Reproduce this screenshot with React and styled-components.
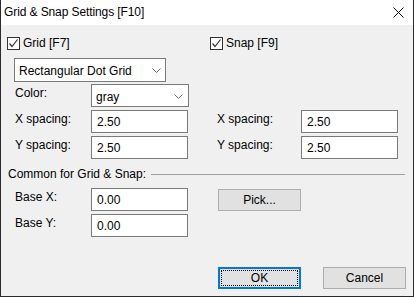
import React from "react";
import styled, { createGlobalStyle } from "styled-components";

const Global = createGlobalStyle`
  html, body { margin: 0; padding: 0; background: #f0f0f0; }
  body { font-family: "Liberation Sans", Arial, sans-serif; font-size: 12px; color: #000; }
  * { box-sizing: border-box; }
`;

const Window = styled.div`
  width: 414px;
  height: 297px;
  display: flex;
  flex-direction: column;
  background: #f0f0f0;
  border: 1px solid #2b2b2b;
  border-top: none;
`;

const TitleBar = styled.div`
  height: 25px;
  flex: none;
  background: #fff;
  display: flex;
  align-items: center;
  justify-content: space-between;
  padding: 0 9px 1px 3px;
  font-size: 12px;
  letter-spacing: -0.1px;
`;

const Content = styled.div`
  flex: 1;
  display: flex;
  flex-direction: column;
  padding: 12px 6px 7px 6px;
`;

const CheckRow = styled.div`
  display: flex;
  height: 13px;
  align-items: center;
`;

const CheckItem = styled.label`
  display: flex;
  align-items: center;
  gap: 3px;
  width: ${(p) => p.$width || "auto"};
  line-height: 13px;
`;

const Box = styled.span`
  width: 13px;
  height: 13px;
  border: 1px solid #333;
  background: #fff;
  display: flex;
  align-items: center;
  justify-content: center;
`;

const Select = styled.div`
  width: ${(p) => p.$width}px;
  height: ${(p) => p.$height}px;
  margin: ${(p) => p.$margin || "0"};
  background: #fff;
  border: 1px solid #7a7a7a;
  display: flex;
  align-items: center;
  justify-content: space-between;
  padding: ${(p) => p.$pad || "1px 6px 0 4px"};
`;

const FieldGrid = styled.div`
  display: grid;
  grid-template-columns: ${(p) => p.$cols};
  grid-auto-rows: 23px;
  row-gap: 3px;
  margin: ${(p) => p.$margin};
`;

const Label = styled.div`
  line-height: 14px;
  padding-top: 2px;
  grid-column: ${(p) => p.$col || "auto"};
`;

const Input = styled.div`
  width: 97px;
  height: 23px;
  background: #fff;
  border: 1px solid #7a7a7a;
  display: flex;
  align-items: center;
  padding: 1px 0 0 5px;
  grid-column: ${(p) => p.$col || "auto"};
`;

const GroupHeader = styled.div`
  display: flex;
  align-items: center;
  height: 14px;
  margin: 8px 2px 0 1px;
  gap: 5px;
`;

const GroupLine = styled.div`
  flex: 1;
  height: 1px;
  background: #a0a0a0;
`;

const Button = styled.div`
  width: 83px;
  height: 22px;
  background: #e1e1e1;
  border: ${(p) => (p.$default ? "2px solid #0078d7" : "1px solid #adadad")};
  display: flex;
  align-items: center;
  justify-content: center;
  padding: ${(p) => (p.$default ? "1px" : "0")};
  grid-column: ${(p) => p.$col || "auto"};
  margin-top: ${(p) => p.$mt || 0}px;
`;

const Focus = styled.div`
  width: 100%;
  height: 100%;
  border: 1px dotted #000;
  display: flex;
  align-items: center;
  justify-content: center;
`;

const Footer = styled.div`
  margin-top: auto;
  display: flex;
  justify-content: flex-end;
  gap: 22px;
  padding-right: 1px;
`;

const Chevron = () => (
  <svg width="9" height="5" viewBox="0 0 9 5">
    <polyline points="0.5,0.5 4.5,4.5 8.5,0.5" fill="none" stroke="#6d6d6d" strokeWidth="1" />
  </svg>
);

const Check = () => (
  <Box>
    <svg width="11" height="11" viewBox="0 0 11 11">
      <polyline points="1.5,5.5 4,8.5 9.5,1.5" fill="none" stroke="#333" strokeWidth="1.2" />
    </svg>
  </Box>
);

const CloseX = () => (
  <svg width="11" height="11" viewBox="0 0 11 11">
    <path d="M0.5 0.5 L10.5 10.5 M10.5 0.5 L0.5 10.5" stroke="#000" strokeWidth="1" />
  </svg>
);

export default function App() {
  return (
    <>
      <Global />
      <Window>
        <TitleBar>
          <span>Grid &amp; Snap Settings [F10]</span>
          <CloseX />
        </TitleBar>
        <Content>
          <CheckRow>
            <CheckItem $width="203px">
              <Check />
              Grid [F7]
            </CheckItem>
            <CheckItem>
              <Check />
              Snap [F9]
            </CheckItem>
          </CheckRow>
          <Select $width={152} $height={24} $margin="8px 0 0 7px" $pad="1px 4px 0 4px">
            <span>Rectangular Dot Grid</span>
            <Chevron />
          </Select>
          <FieldGrid $cols="76px 98px 28px 84px 97px" $margin="2px 0 0 8px">
            <Label>Color:</Label>
            <Select $width={98} $height={23} $pad="2px 5px 0 4px">
              <span>gray</span>
              <Chevron />
            </Select>
            <Label $col="1">X spacing:</Label>
            <Input>2.50</Input>
            <Label $col="4">X spacing:</Label>
            <Input>2.50</Input>
            <Label $col="1">Y spacing:</Label>
            <Input>2.50</Input>
            <Label $col="4">Y spacing:</Label>
            <Input>2.50</Input>
          </FieldGrid>
          <GroupHeader>
            <span>Common for Grid &amp; Snap:</span>
            <GroupLine />
          </GroupHeader>
          <FieldGrid $cols="76px 97px 30px 83px" $margin="7px 0 0 8px">
            <Label>Base X:</Label>
            <Input>0.00</Input>
            <Button $col="4" $mt={1}>Pick...</Button>
            <Label $col="1">Base Y:</Label>
            <Input>0.00</Input>
          </FieldGrid>
          <Footer>
            <Button $default>
              <Focus>OK</Focus>
            </Button>
            <Button>Cancel</Button>
          </Footer>
        </Content>
      </Window>
    </>
  );
}
